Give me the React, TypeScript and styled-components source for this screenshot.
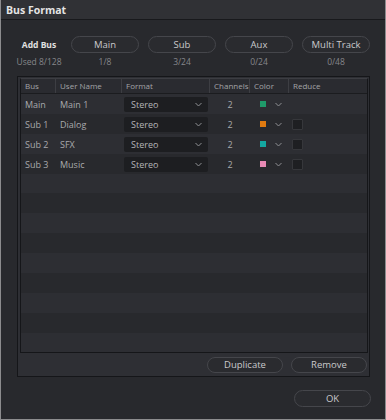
import React from 'react';
import styled, { createGlobalStyle } from 'styled-components';

const GlobalStyle = createGlobalStyle`
    body {
        margin: 0;
        background: #28292d;
        font-family: "Open Sans", "Noto Sans", sans-serif;
    }
`;

const Window = styled.div`
    width: 386px;
    height: 420px;
    box-sizing: border-box;
    background: #28292d;
    border-left: 1px solid #8c8c8e;
    border-right: 1px solid #8c8c8e;
    border-bottom: 1px solid #8c8c8e;
    display: flex;
    flex-direction: column;
`;

const TitleBar = styled.div`
    height: 19px;
    flex: none;
    background: #303135;
    border-bottom: 1px solid #18191c;
    display: flex;
    align-items: center;
    padding-left: 5px;
    font-size: 10.5px;
    font-weight: bold;
    color: #e4e4e4;
`;

const AddBusRow = styled.div`
    display: grid;
    grid-template-columns: 46px repeat(4, 68px);
    column-gap: 9px;
    row-gap: 3px;
    padding: 16px 0 0 15px;
`;

const AddBusLabel = styled.div`
    font-size: 8.5px;
    font-weight: bold;
    color: #e0e0e0;
    text-align: center;
    line-height: 17px;
    white-space: nowrap;
`;

const Count = styled.div`
    font-size: 8.5px;
    color: #86878b;
    text-align: center;
    white-space: nowrap;
`;

const PillButton = styled.div<{ $w?: number; $h?: number }>`
    width: ${p => (p.$w ? `${p.$w}px` : 'auto')};
    height: ${p => p.$h || 16}px;
    box-sizing: border-box;
    border: 1px solid #45464b;
    border-radius: 9px;
    background: #2a2b2f;
    color: #c9c9cb;
    font-size: 9.5px;
    display: flex;
    align-items: center;
    justify-content: center;
`;

const Panel = styled.div`
    margin: 9px 15px 0 16px;
    height: 301px;
    box-sizing: border-box;
    border: 1px solid #151619;
    background: #2e2f34;
    padding: 1px 1px 0 2px;
    display: flex;
    flex-direction: column;
`;

const Table = styled.div`
    flex: 1;
    border: 1px solid #151619;
    border-top-color: #3c3d42;
    background: repeating-linear-gradient(
        to bottom,
        #2d2e33 0px,
        #2d2e33 20px,
        #28292d 20px,
        #28292d 40px
    );
    background-position: 0 14px;
    overflow: hidden;
`;

const Grid = `
    display: grid;
    grid-template-columns: 35px 66px 88px 40px 39px 1fr;
`;

const HeaderRow = styled.div`
    ${Grid};
    height: 14px;
    background: #2a2b30;
    border-bottom: 1px solid #1b1c1f;
`;

const HeaderCell = styled.div<{ $last?: boolean }>`
    font-size: 8px;
    color: #a3a4a7;
    line-height: 14px;
    padding-left: 4px;
    border-right: ${p => (p.$last ? 'none' : '1px solid #3d3e43')};
`;

const Row = styled.div<{ $odd: boolean }>`
    ${Grid};
    height: 20px;
    align-items: center;
    background: ${p => (p.$odd ? '#28292d' : '#2d2e33')};
`;

const Cell = styled.div<{ $center?: boolean }>`
    font-size: 9px;
    color: #a8a9ac;
    padding-left: ${p => (p.$center ? 0 : 4)}px;
    display: flex;
    align-items: center;
    justify-content: ${p => (p.$center ? 'center' : 'flex-start')};
`;

const SelectCell = styled.div`
    display: flex;
    align-items: center;
`;

const Select = styled.div`
    width: 84px;
    height: 15px;
    margin-left: 2px;
    box-sizing: border-box;
    background: #1d1e21;
    border-radius: 2px;
    display: flex;
    align-items: center;
    justify-content: space-between;
    padding: 0 6px 0 7px;
    font-size: 9px;
    color: #b4b5b8;
`;

const ColorCell = styled.div`
    display: flex;
    align-items: center;
    padding-left: 10px;
    gap: 9px;
`;

const Swatch = styled.div<{ $color: string }>`
    width: 6px;
    height: 6px;
    background: ${p => p.$color};
`;

const Checkbox = styled.div`
    width: 11px;
    height: 11px;
    margin-left: 3px;
    box-sizing: border-box;
    background: #1e1f22;
    border: 1px solid #36373b;
    border-radius: 1px;
`;

const ActionBar = styled.div`
    height: 23px;
    display: flex;
    justify-content: flex-end;
    align-items: center;
    gap: 8px;
    padding-right: 1px;
`;

const Footer = styled.div`
    display: flex;
    justify-content: flex-end;
    padding: 13px 14px 0 0;
`;

const Chevron = () => (
    <svg width="7" height="5" viewBox="0 0 7 5">
        <path d="M0.5 1 L3.5 4 L6.5 1" fill="none" stroke="#8e8f93" strokeWidth="1" />
    </svg>
);

const buses = [
    { bus: 'Main', name: 'Main 1', color: '#1f9a6a', reduce: false },
    { bus: 'Sub 1', name: 'Dialog', color: '#e07a10', reduce: true },
    { bus: 'Sub 2', name: 'SFX', color: '#14a7a0', reduce: true },
    { bus: 'Sub 3', name: 'Music', color: '#e889b4', reduce: true },
];

const addButtons = [
    { label: 'Main', count: '1/8' },
    { label: 'Sub', count: '3/24' },
    { label: 'Aux', count: '0/24' },
    { label: 'Multi Track', count: '0/48' },
];

const App = () => {
    return (
        <Window>
            <GlobalStyle />
            <TitleBar>Bus Format</TitleBar>
            <AddBusRow>
                <AddBusLabel>Add Bus</AddBusLabel>
                {addButtons.map(b => (
                    <PillButton key={b.label} $h={17}>{b.label}</PillButton>
                ))}
                <Count>Used 8/128</Count>
                {addButtons.map(b => (
                    <Count key={b.label}>{b.count}</Count>
                ))}
            </AddBusRow>
            <Panel>
                <Table>
                    <HeaderRow>
                        <HeaderCell>Bus</HeaderCell>
                        <HeaderCell>User Name</HeaderCell>
                        <HeaderCell>Format</HeaderCell>
                        <HeaderCell>Channels</HeaderCell>
                        <HeaderCell>Color</HeaderCell>
                        <HeaderCell $last>Reduce</HeaderCell>
                    </HeaderRow>
                    {buses.map((item, index) => (
                        <Row key={item.bus} $odd={index % 2 === 1}>
                            <Cell>{item.bus}</Cell>
                            <Cell>{item.name}</Cell>
                            <SelectCell>
                                <Select>Stereo<Chevron /></Select>
                            </SelectCell>
                            <Cell $center>2</Cell>
                            <ColorCell>
                                <Swatch $color={item.color} />
                                <Chevron />
                            </ColorCell>
                            <div>{item.reduce && <Checkbox />}</div>
                        </Row>
                    ))}
                </Table>
                <ActionBar>
                    <PillButton $w={76}>Duplicate</PillButton>
                    <PillButton $w={76}>Remove</PillButton>
                </ActionBar>
            </Panel>
            <Footer>
                <PillButton $w={77} $h={17}>OK</PillButton>
            </Footer>
        </Window>
    );
};

export default App;
